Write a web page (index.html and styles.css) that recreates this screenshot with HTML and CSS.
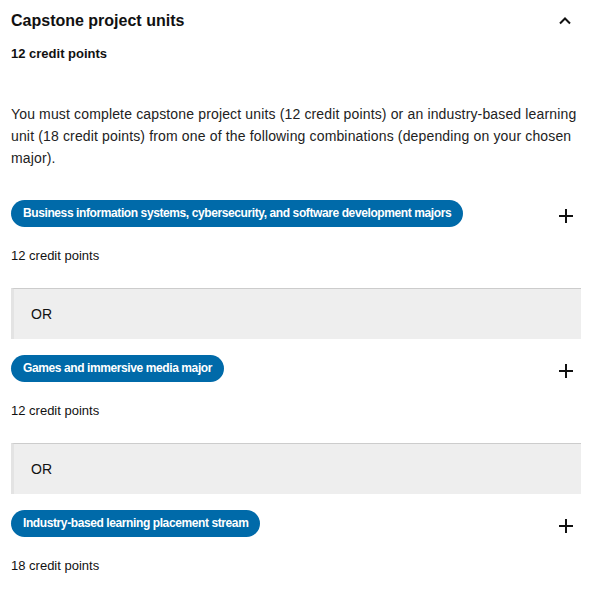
FILE: index.html
```html
<!DOCTYPE html>
<html lang="en">
<head>
    <meta charset="UTF-8">
    <meta name="viewport" content="width=device-width, initial-scale=1.0">
    <title>Capstone project units</title>
    <link rel="stylesheet" href="styles.css">
</head>
<body>

<div class="container">
    <!-- Accordion header for the capstone section -->
    <div class="section-head">
        <h2>Capstone project units</h2>
        <svg class="chevron" width="14" height="14" viewBox="0 0 14 14">
            <path d="M2 9.5 L7 4.5 L12 9.5" fill="none" stroke="#111" stroke-width="2"/>
        </svg>
    </div>
    <p class="credits-total">12 credit points</p>

    <p class="intro">You must complete capstone project units (12 credit points) or an industry-based learning unit (18 credit points) from one of the following combinations (depending on your chosen major).</p>

    <div class="option">
        <div class="option-head">
            <span class="pill">Business information systems, cybersecurity, and software development majors</span>
            <svg class="plus" width="16" height="16" viewBox="0 0 16 16">
                <path d="M8 1 V15 M1 8 H15" stroke="#111" stroke-width="2"/>
            </svg>
        </div>
        <p class="credits">12 credit points</p>
    </div>

    <div class="or-box">OR</div>

    <div class="option">
        <div class="option-head">
            <span class="pill">Games and immersive media major</span>
            <svg class="plus" width="16" height="16" viewBox="0 0 16 16">
                <path d="M8 1 V15 M1 8 H15" stroke="#111" stroke-width="2"/>
            </svg>
        </div>
        <p class="credits">12 credit points</p>
    </div>

    <div class="or-box">OR</div>

    <div class="option">
        <div class="option-head">
            <span class="pill">Industry-based learning placement stream</span>
            <svg class="plus" width="16" height="16" viewBox="0 0 16 16">
                <path d="M8 1 V15 M1 8 H15" stroke="#111" stroke-width="2"/>
            </svg>
        </div>
        <p class="credits">18 credit points</p>
    </div>
</div>

</body>
</html>
```

FILE: styles.css
```css
body {
    font-family: "Liberation Sans", Arial, sans-serif;
    background-color: #fff;
    color: #111;
    margin: 0;
    padding: 0;
}
.container {
    width: 570px;
    padding: 10px 14px 20px 11px;
}
.section-head {
    display: flex;
    justify-content: space-between;
    align-items: center;
    height: 22px;
}
h2 {
    font-size: 16px;
    font-weight: bold;
    margin: 0;
}
.chevron {
    margin-right: 9px;
}
.credits-total {
    font-size: 13px;
    font-weight: bold;
    margin: 14px 0 0;
}
.intro {
    font-size: 14px;
    line-height: 22px;
    letter-spacing: 0.15px;
    color: #222;
    margin: 42px 0 0;
}
.option {
    margin-top: 31px;
}
.or-box + .option {
    margin-top: 30px;
}
.option-head {
    display: flex;
    justify-content: space-between;
    align-items: center;
}
.pill {
    display: inline-block;
    background-color: #006aa9;
    color: #fff;
    font-size: 12px;
    font-weight: bold;
    letter-spacing: -0.4px;
    line-height: 27px;
    padding: 0 12px;
    border-radius: 14px;
}
.plus {
    margin-right: 7px;
    margin-top: 4px;
}
.credits {
    font-size: 13px;
    margin: 21px 0 0;
}
.or-box {
    margin-top: 25px;
    background-color: #eee;
    border-top: 1px solid #ccc;
    border-left: 3px solid #e3e3e3;
    font-size: 14px;
    line-height: 50px;
    padding-left: 17px;
    margin-bottom: -14px;
}
```
